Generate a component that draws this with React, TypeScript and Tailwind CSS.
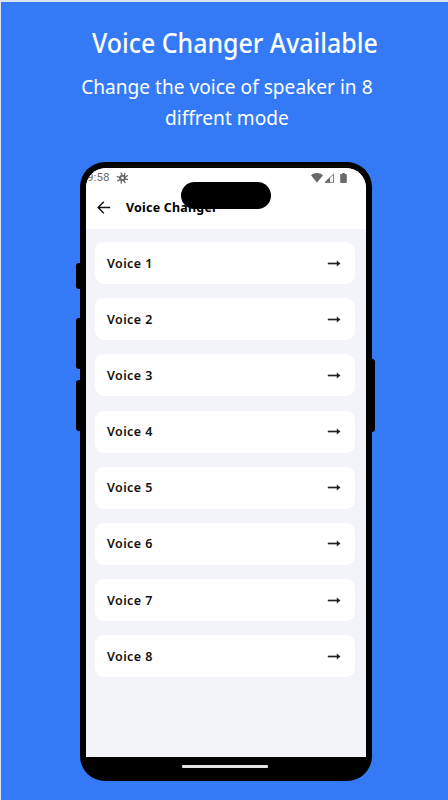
const VOICES = [
  "Voice 1",
  "Voice 2",
  "Voice 3",
  "Voice 4",
  "Voice 5",
  "Voice 6",
  "Voice 7",
  "Voice 8",
];

const SideButtons = () => {
  return (
    <>
      <span className="absolute -left-[4px] top-[101px] h-[26px] w-2 rounded-[3px] bg-black" />
      <span className="absolute -left-[4px] top-[156px] h-[51px] w-2 rounded-[3px] bg-black" />
      <span className="absolute -left-[4px] top-[218px] h-[51px] w-2 rounded-[3px] bg-black" />
      <span className="absolute -right-[3px] top-[197px] h-[73px] w-2 rounded-[3px] bg-black" />
    </>
  );
};

const StatusBar = () => {
  return (
    <div className="flex h-[19px] items-center justify-between pr-[19px] text-[#6a6a6a]">
      <div className="flex items-center">
        <span className="ml-px font-['Roboto',sans-serif] text-[11.5px] leading-[19px] tracking-[0.1px]">
          9:58
        </span>
        <svg
          className="ml-[6px] h-3 w-[13px]"
          viewBox="0 0 12 12"
          fill="none"
          stroke="currentColor"
          strokeWidth="1.3"
        >
          <circle cx="6" cy="6" r="2.3" strokeWidth="2" />
          <path d="M6 3.5L4.2.6M8 4.2L8.3.8M8.6 5.5L11.3 3.2M8.4 7L11.6 7.6M7 8.4L9 11.2M5 8.6L4.5 11.6M3.7 7.4L.8 9.3M3.5 5.5L.3 4.3" />
        </svg>
      </div>
      <div className="flex items-center">
        <svg className="h-[10px] w-3" viewBox="0 0 12 10" fill="currentColor">
          <path d="M0 2.2C3.5-.6 8.5-.6 12 2.2L6 9.8z" />
        </svg>
        <svg className="ml-[1px] h-[10px] w-[11px]" viewBox="0 0 11 10">
          <path d="M1.3 9.3L9.6 1.1V9.3z" fill="none" stroke="currentColor" strokeWidth="0.9" />
          <path d="M.5 9.6L6 4.2V9.6z" fill="currentColor" />
        </svg>
        <svg className="ml-[5px] h-[10px] w-[7px]" viewBox="0 0 7 10" fill="currentColor">
          <path d="M2.2 0h2.6v1.1h1.3q.7 0 .7.7v7.5q0 .7-.7.7H.9q-.7 0-.7-.7V1.8q0-.7.7-.7h1.3z" />
        </svg>
      </div>
    </div>
  );
};

const VoiceItem = ({ label }: { label: string }) => {
  return (
    <li className="flex h-[42px] items-center justify-between rounded-[9px] bg-white pl-3 pr-[14px]">
      <span className="pt-px font-['Noto_Sans',sans-serif] text-[12.5px] font-semibold leading-[18px] tracking-[0.4px] text-[#111]">
        {label}
      </span>
      <svg className="h-[7px] w-[14px]" viewBox="0 0 14 7">
        <path d="M0.8 3.5H10.5" stroke="#222" strokeWidth="1.7" />
        <path d="M9.8 .6L13.5 3.5L9.8 6.4z" fill="#222" />
      </svg>
    </li>
  );
};

const App = () => {
  return (
    <div className="h-[800px] w-[448px] overflow-hidden border-l border-t-2 border-[#d9e3ee] bg-[#347af6]">
      <header className="flex h-[160px] flex-col whitespace-nowrap font-['Noto_Sans',sans-serif] text-white">
        <h1 className="ml-[91px] mt-[22px] origin-left scale-x-[0.906] text-[27.5px] font-medium leading-[38px]">
          Voice Changer Available
        </h1>
        <p className="ml-[80px] mt-[9px] w-[313px] origin-left scale-x-[0.932] text-center text-[20.5px] leading-[31px]">
          Change the voice of speaker in 8
          <br />
          diffrent mode
        </p>
      </header>

      <main className="relative ml-[79px] h-[619px] w-[292px] rounded-[25px] bg-black px-[6px] pt-[6px]">
        <SideButtons />
        <div className="h-[589px] overflow-hidden rounded-t-[20px] bg-[#f3f4fa]">
          <div className="h-[61px] bg-white">
            <StatusBar />
            <div className="flex h-[40px] items-center pl-[11px]">
              <svg
                className="h-[13px] w-[14px]"
                viewBox="0 0 14 13"
                fill="none"
                stroke="#111"
                strokeWidth="1.4"
              >
                <path d="M13.2 6.5H1.3M6.8 .8L1.1 6.5L6.8 12.2" />
              </svg>
              <h2 className="ml-[15px] pt-px font-['Noto_Sans',sans-serif] text-[12.5px] font-bold leading-[18px] tracking-[0.2px] text-black">
                Voice Changer
              </h2>
            </div>
          </div>
          <ul className="flex flex-col gap-[14.2px] pl-[9px] pr-[11px] pt-[13px]">
            {VOICES.map((voice) => (
              <VoiceItem key={voice} label={voice} />
            ))}
          </ul>
        </div>
        <div className="ml-24 mt-[8px] h-[3px] w-[86px] rounded-[1px] bg-[#e4e4e4]" />
        <span className="absolute left-[101px] top-[20px] h-[27px] w-[90px] rounded-full bg-black" />
      </main>
    </div>
  );
};

export default App;
